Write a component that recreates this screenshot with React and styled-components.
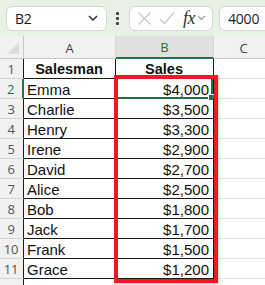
import React from "react";
import styled, { createGlobalStyle } from "styled-components";

const GlobalStyle = createGlobalStyle`
  html, body { margin: 0; padding: 0; background: #ffffff; overflow: hidden; }
  body { font-family: "Liberation Sans", Arial, sans-serif; }
`;

const Wrapper = styled.div`
  position: relative;
  width: 265px;
  height: 285px;
  overflow: hidden;
  background: #ffffff;
`;

const Toolbar = styled.div`
  display: flex;
  align-items: center;
  height: 36px;
  padding-left: 6px;
  background: #e9f0e6;
  box-sizing: border-box;
`;

const Box = styled.div`
  display: flex;
  align-items: center;
  height: 25px;
  box-sizing: border-box;
  background: #ffffff;
  border: 1px solid #d3d8d1;
  border-radius: 6px;
  flex: ${(p) => (p.$grow ? "1 0 auto" : "0 0 auto")};
  width: ${(p) => (p.$w ? `${p.$w}px` : "auto")};
  margin-right: ${(p) => (p.$grow ? "-12px" : "0")};
  padding: 0 ${(p) => p.$px || 0}px;
`;

const BoxText = styled.span`
  flex: 1;
  font-family: "Open Sans", "Liberation Sans", sans-serif;
  font-size: 14px;
  color: #1b1b1b;
  letter-spacing: -0.2px;
`;

const DotsArea = styled.div`
  width: 22px;
  display: flex;
  flex-direction: column;
  align-items: center;
  gap: 2px;
  padding-right: 1px;
  box-sizing: border-box;
`;

const Dot = styled.span`
  width: 3px;
  height: 3px;
  border-radius: 1px;
  background: #444;
`;

const Gap = styled.div`
  width: 6px;
  flex: 0 0 6px;
`;

const FxText = styled.span`
  font-family: "Liberation Serif", "Times New Roman", serif;
  font-style: italic;
  font-size: 18px;
  color: #333;
  margin-left: 8px;
  letter-spacing: -0.5px;
`;

const Sheet = styled.div`
  display: grid;
  grid-template-columns: 24px 92px 98px 60px;
  grid-auto-rows: 20px;
  grid-template-rows: 23px;
`;

const ColHead = styled.div`
  display: flex;
  align-items: center;
  justify-content: center;
  box-sizing: border-box;
  background: ${(p) => (p.$active ? "#e0e0e0" : "#f1f1f1")};
  border-right: 1px solid #d6d6d6;
  border-bottom: ${(p) => (p.$active ? "2px solid #217346" : "1px solid #c8c8c8")};
  color: ${(p) => (p.$active ? "#217346" : "#444")};
  font-family: "Open Sans", "Liberation Sans", sans-serif;
  font-size: 13px;
  padding-top: 1px;
`;

const Corner = styled.div`
  position: relative;
  background: #f1f1f1;
  box-sizing: border-box;
  border-right: 1px solid #c8c8c8;
  border-bottom: 1px solid #c8c8c8;
`;

const CornerTri = styled.div`
  position: absolute;
  right: 4px;
  bottom: 4px;
  width: 0;
  height: 0;
  border-left: 12px solid transparent;
  border-bottom: 12px solid #dcdcdc;
`;

const RowHead = styled.div`
  display: flex;
  align-items: center;
  justify-content: center;
  box-sizing: border-box;
  background: #f1f1f1;
  border-bottom: 1px solid #d6d6d6;
  border-right: ${(p) => (p.$active ? "2px solid #217346" : "1px solid #1a1a1a")};
  color: ${(p) => (p.$active ? "#217346" : "#555")};
  font-family: "Open Sans", "Liberation Sans", sans-serif;
  font-size: 13px;
  letter-spacing: -0.3px;
  padding-right: 1px;
`;

const Cell = styled.div`
  position: relative;
  display: flex;
  align-items: center;
  box-sizing: border-box;
  justify-content: ${(p) => (p.$align === "right" ? "flex-end" : p.$align === "center" ? "center" : "flex-start")};
  padding: 1px 4px 0 3px;
  border-right: 1px solid ${(p) => (p.$table ? "#1a1a1a" : "#e1e1e1")};
  border-bottom: 1px solid ${(p) => (p.$table ? "#1a1a1a" : "#e1e1e1")};
  font-family: "Liberation Sans", Arial, sans-serif;
  font-size: ${(p) => (p.$bold ? "14.5px" : "15px")};
  font-weight: ${(p) => (p.$bold ? 700 : 400)};
  color: #111;
  white-space: nowrap;
`;

const Selection = styled.div`
  position: absolute;
  left: -2px;
  top: -2px;
  right: 0;
  bottom: -1px;
  border: 2px solid #217346;
  pointer-events: none;
`;

const FillHandle = styled.div`
  position: absolute;
  right: -4px;
  bottom: -4px;
  width: 5px;
  height: 5px;
  background: #217346;
  border: 1px solid #ffffff;
`;

const Highlight = styled.div`
  position: absolute;
  left: 114px;
  top: 75px;
  width: 104px;
  height: 208px;
  box-sizing: border-box;
  border: 4px solid #e81c22;
  box-shadow: 1px 1px 2px rgba(0, 0, 0, 0.25);
  pointer-events: none;
`;

const Chevron = ({ size = 10, color = "#333", ml = 0 }) => (
  <svg width={size} height={size * 0.6} viewBox="0 0 10 6" style={{ marginLeft: ml }}>
    <path d="M1 1 L5 5 L9 1" fill="none" stroke={color} strokeWidth="1.3" />
  </svg>
);

const data = [
  ["Emma", "$4,000"],
  ["Charlie", "$3,500"],
  ["Henry", "$3,300"],
  ["Irene", "$2,900"],
  ["David", "$2,700"],
  ["Alice", "$2,500"],
  ["Bob", "$1,800"],
  ["Jack", "$1,700"],
  ["Frank", "$1,500"],
  ["Grace", "$1,200"],
];

export default function App() {
  return (
    <Wrapper>
      <GlobalStyle />
      <Toolbar>
        <Box $w={101} $px={8}>
          <BoxText>B2</BoxText>
          <Chevron size={10} color="#222" />
        </Box>
        <DotsArea>
          <Dot />
          <Dot />
          <Dot />
        </DotsArea>
        <Box $w={84} $px={6}>
          <svg width="15" height="15" viewBox="0 0 15 15" style={{ marginLeft: 1 }}>
            <path d="M1.5 1.5 L13.5 13.5 M13.5 1.5 L1.5 13.5" stroke="#c4c4c4" strokeWidth="1.2" />
          </svg>
          <svg width="16" height="14" viewBox="0 0 16 14" style={{ marginLeft: 7 }}>
            <path d="M1 8 L5.5 12.5 L15 1.5" fill="none" stroke="#c4c4c4" strokeWidth="1.2" />
          </svg>
          <FxText>fx</FxText>
          <Chevron size={9} color="#999" ml={2} />
        </Box>
        <Gap />
        <Box $grow $px={8}>
          <BoxText>4000</BoxText>
        </Box>
      </Toolbar>
      <Sheet>
        <Corner>
          <CornerTri />
        </Corner>
        <ColHead>A</ColHead>
        <ColHead $active>B</ColHead>
        <ColHead>C</ColHead>

        <RowHead>1</RowHead>
        <Cell $table $bold $align="center">Salesman</Cell>
        <Cell $table $bold $align="center">Sales</Cell>
        <Cell />

        {data.map(([name, sales], i) => (
          <React.Fragment key={name}>
            <RowHead $active={i === 0}>{i + 2}</RowHead>
            <Cell $table>{name}</Cell>
            <Cell $table $align="right">
              {sales}
              {i === 0 && (
                <Selection>
                  <FillHandle />
                </Selection>
              )}
            </Cell>
            <Cell />
          </React.Fragment>
        ))}

        <RowHead />
        <Cell />
        <Cell />
        <Cell />
      </Sheet>
      <Highlight />
    </Wrapper>
  );
}
